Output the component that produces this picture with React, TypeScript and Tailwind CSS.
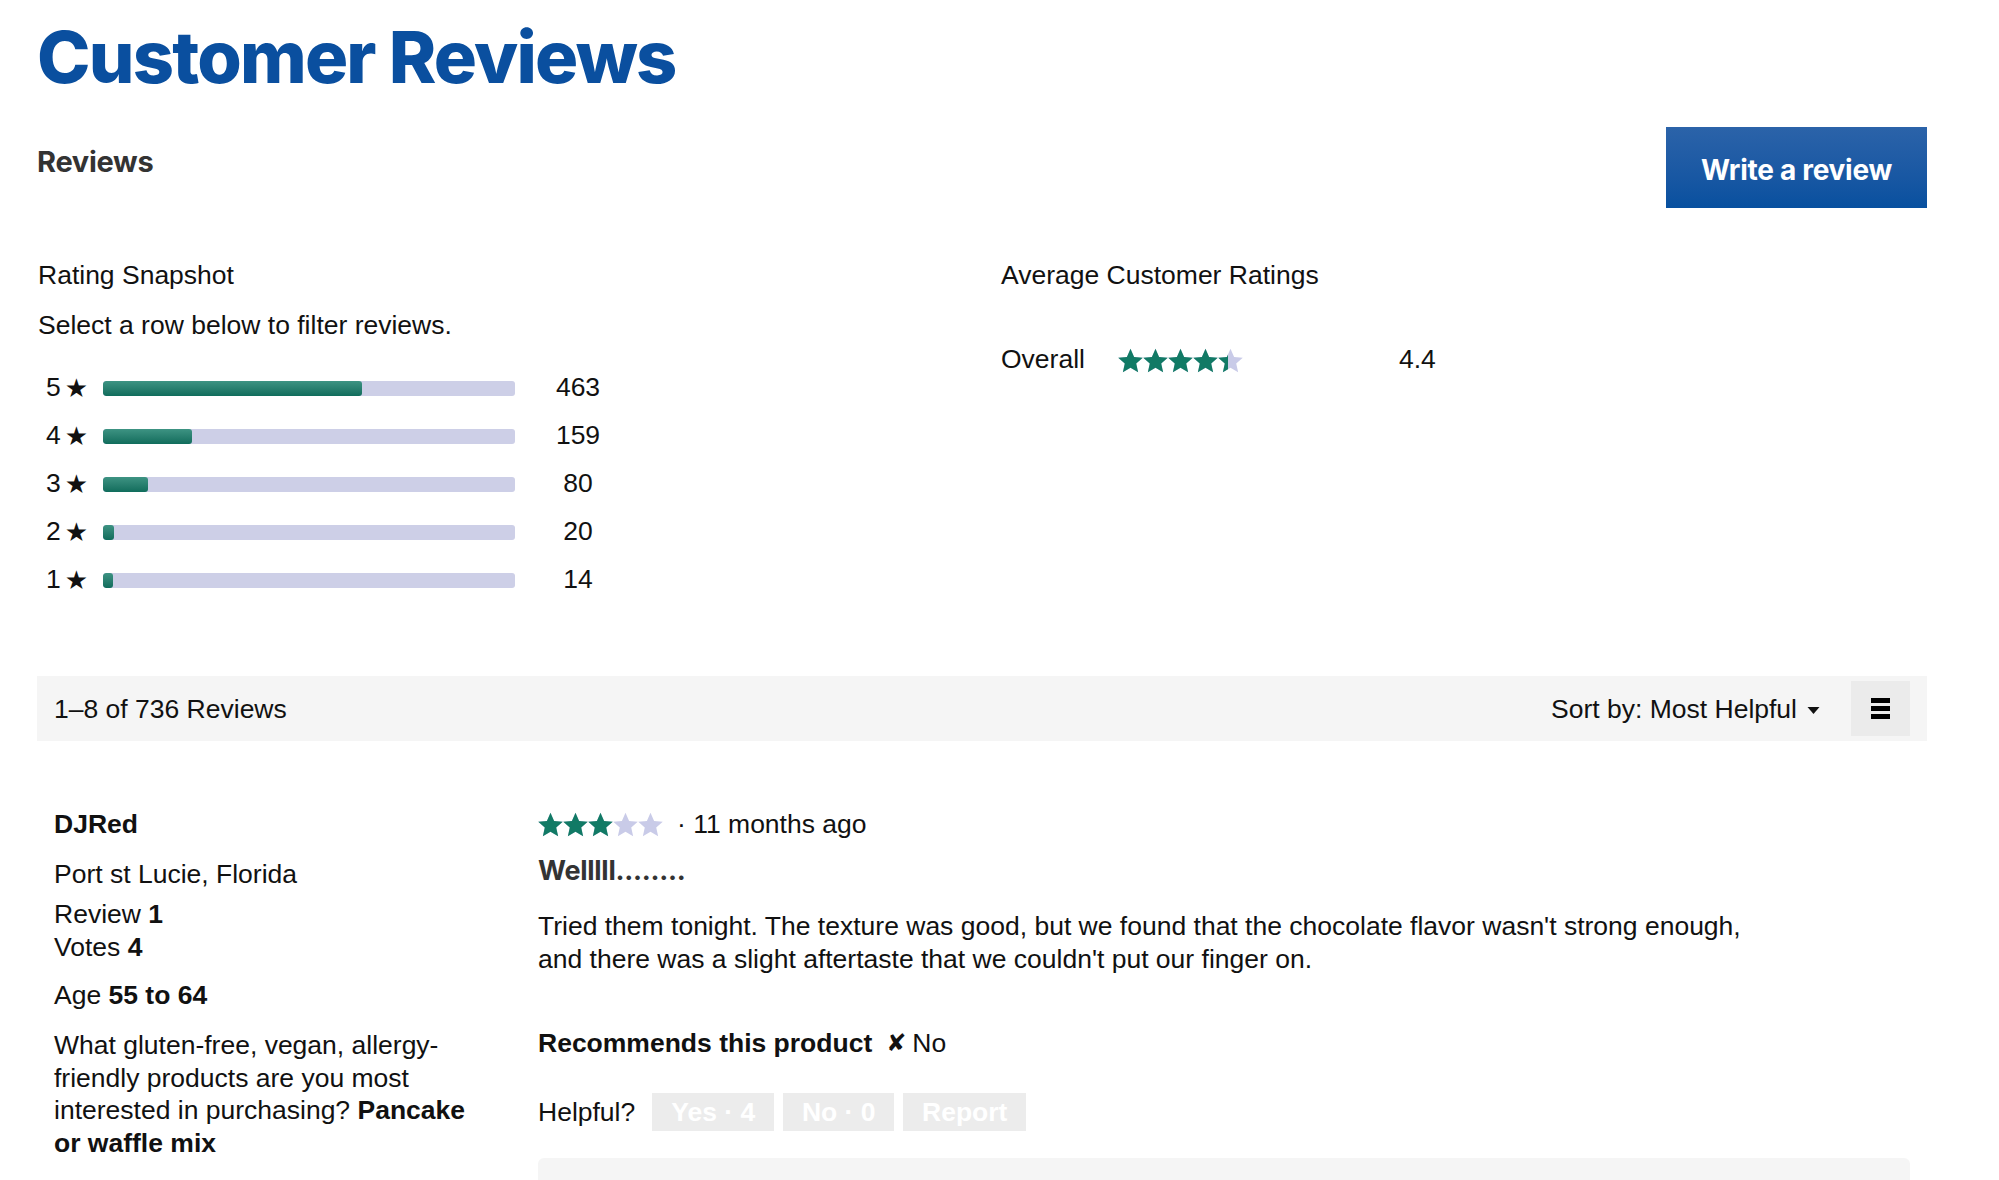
import React from 'react';

const snapshot = [
    { stars: 5, count: 463 },
    { stars: 4, count: 159 },
    { stars: 3, count: 80 },
    { stars: 2, count: 20 },
    { stars: 1, count: 14 },
];
const total = 736;

const STAR = "M12 1.5l3.09 6.9 7.41.72-5.6 4.98 1.64 7.4L12 17.68 5.46 21.5l1.64-7.4L1.5 9.12l7.41-.72z";

var Star = ({ fill }: { fill: number }) => {
    // fill goes 0..1, partial stars get clipped
    return (
        <span className="relative inline-block w-[25px] h-[25px]">
            <svg viewBox="1.3 1.3 21.4 20.4" className="absolute inset-0 w-[25px] h-[25px]">
                <path d={STAR} fill="#c9cbe8" />
            </svg>
            <span className="absolute inset-y-0 left-0 overflow-hidden" style={{ width: `${fill * 100}%` }}>
                <svg viewBox="1.3 1.3 21.4 20.4" className="w-[25px] h-[25px]">
                    <path d={STAR} fill="#117a65" />
                </svg>
            </span>
        </span>
    );
};

var Stars = ({ value }: { value: number }) => {
    return (
        <span className="flex items-center">
            {[0, 1, 2, 3, 4].map((i) => (
                <Star key={i} fill={Math.max(0, Math.min(1, value - i))} />
            ))}
        </span>
    );
};

export default function App() {
    return (
        <div className="min-h-screen bg-white text-[#111] font-['Liberation_Sans',Arial,sans-serif]">
            <div className="ml-[37px] w-[1890px]">
                <h1 className="pt-[21px] h-[93px] text-[72px] leading-[72px] font-extrabold tracking-[-0.025em] text-[#0a4f9f] font-['Inter',sans-serif]">
                    Customer Reviews
                </h1>

                <div className="mt-[34px] flex items-start justify-between">
                    <h2 className="pt-[18px] text-[29px] leading-[34px] font-bold tracking-[-0.01em] text-[#333] font-['Inter',sans-serif]">Reviews</h2>
                    <button className="w-[261px] h-[81px] pt-[4px] bg-linear-to-b from-[#2b63a9] to-[#07509f] text-white text-[28px] font-bold tracking-[-0.01em] font-['Inter',sans-serif]">
                        Write a review
                    </button>
                </div>

                <div className="mt-[50px] flex">
                    <div className="w-[964px] pl-[1px]">
                        <div className="text-[26.5px] leading-[34px]">Rating Snapshot</div>
                        <div className="mt-[16px] text-[26.5px] leading-[34px]">Select a row below to filter reviews.</div>
                        <div className="mt-[22px]">
                            {snapshot.map((row) => (
                                <div key={row.stars} className="flex items-center h-[48px] text-[26.5px]">
                                    <div className="w-[65px] pl-[8px] flex items-center">
                                        <span>{row.stars}</span>
                                        <span className="ml-[4px] text-[26px] font-['DejaVu_Sans',sans-serif]">★</span>
                                    </div>
                                    <div className="w-[412px] h-[15px] rounded-[3px] bg-[#cdcfe7] overflow-hidden">
                                        <div className="h-full rounded-[3px] bg-linear-to-b from-[#3d9383] to-[#0f6d5c]" style={{ width: `${Math.max(row.count / total * 100, 2.5)}%` }}></div>
                                    </div>
                                    <div className="ml-[13px] w-[100px] text-center">{row.count}</div>
                                </div>
                            ))}
                        </div>
                    </div>
                    <div className="flex-1">
                        <div className="text-[26.5px] leading-[34px]">Average Customer Ratings</div>
                        <div className="mt-[51px] flex items-center h-[34px] text-[26.5px]">
                            <span className="w-[117px]">Overall</span>
                            <Stars value={4.4} />
                            <span className="ml-[156px]">4.4</span>
                        </div>
                    </div>
                </div>

                <div className="mt-[72px] h-[65px] bg-[#f5f5f5] flex items-center justify-between pl-[17px] pr-[17px] text-[26.5px]">
                    <span className="pt-[2px]">1–8 of 736 Reviews</span>
                    <div className="flex items-center">
                        <span className="pt-[2px]">Sort by: Most Helpful</span>
                        <svg viewBox="0 0 12 8" className="ml-[10px] mt-[4px] w-[13px] h-[8px]">
                            <path d="M0 0h12L6 7z" fill="#111" />
                        </svg>
                        <button className="ml-[31px] w-[59px] h-[55px] bg-[#ebebeb] flex flex-col items-center justify-center gap-[3px]">
                            <span className="block w-[19px] h-[5px] bg-black"></span>
                            <span className="block w-[19px] h-[5px] bg-black"></span>
                            <span className="block w-[19px] h-[5px] bg-black"></span>
                        </button>
                    </div>
                </div>

                <div className="mt-[67px] flex text-[26.5px] leading-[33px]">
                    <div className="w-[501px] pl-[17px] pr-[57px]">
                        <div className="font-bold">DJRed</div>
                        <div className="mt-[17px]">Port st Lucie, Florida</div>
                        <div className="mt-[7px]">Review <b>1</b></div>
                        <div>Votes <b>4</b></div>
                        <div className="mt-[15px]">Age <b>55 to 64</b></div>
                        <div className="mt-[17px] leading-[32.5px]">
                            What gluten-free, vegan, allergy-friendly products are you most interested in purchasing? <b>Pancake or waffle mix</b>
                        </div>
                    </div>
                    <div className="flex-1 pr-[17px]">
                        <div className="flex items-center h-[33px]">
                            <Stars value={3} />
                            <span className="ml-[14px]">· 11 months ago</span>
                        </div>
                        <div className="mt-[13px] text-[27px] font-bold text-[#333] tracking-[-0.01em] font-['Inter',sans-serif]">Welllll........</div>
                        <div className="mt-[23px] max-w-[1240px]">
                            Tried them tonight. The texture was good, but we found that the chocolate flavor wasn't strong enough, and there was a slight aftertaste that we couldn't put our finger on.
                        </div>
                        <div className="mt-[51px] flex items-center">
                            <span className="font-bold">Recommends this product</span>
                            <span className="ml-[14px] text-[24px] font-bold font-['DejaVu_Sans',sans-serif]">✘</span>
                            <span className="ml-[6px]">No</span>
                        </div>
                        <div className="mt-[33px] flex items-center">
                            <span className="mr-[17px]">Helpful?</span>
                            <div className="flex gap-[9px]">
                                <button className="w-[122px] h-[38px] bg-[#ececec] text-white font-bold">Yes · 4</button>
                                <button className="w-[111px] h-[38px] bg-[#ececec] text-white font-bold">No · 0</button>
                                <button className="w-[123px] h-[38px] bg-[#ececec] text-white font-bold">Report</button>
                            </div>
                        </div>
                        <div className="mt-[27px] h-[40px] rounded-t-[6px] bg-[#f5f5f5]"></div>
                    </div>
                </div>
            </div>
        </div>
    );
}
